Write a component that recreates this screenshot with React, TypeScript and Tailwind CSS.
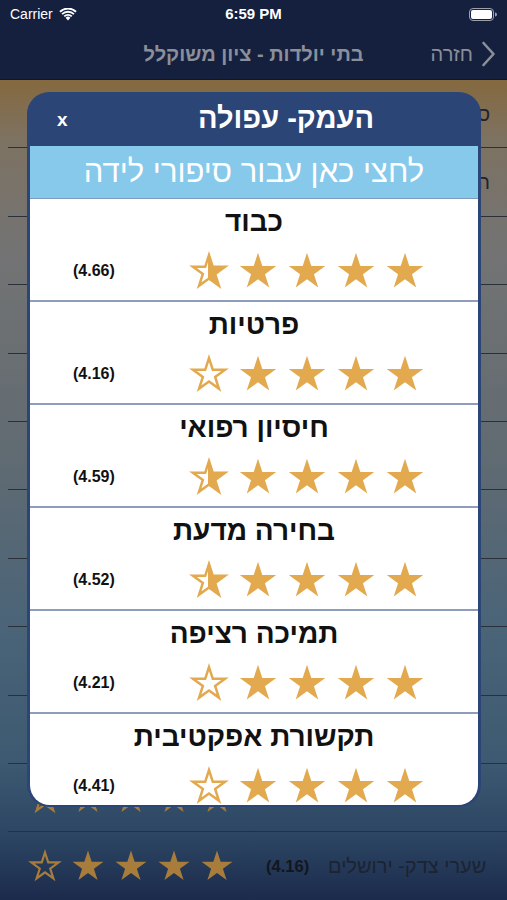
import React from "react";

const STAR =
  "M12 1.1L14.59 9.04L22.94 9.05L16.18 13.96L18.76 21.9L12 17L5.24 21.9L7.82 13.96L1.06 9.05L9.41 9.04Z";
const STAR_OUT =
  "M12 2.48L14.28 9.47L21.63 9.48L15.68 13.8L17.95 20.78L12 16.47L6.05 20.78L8.32 13.8L2.37 9.48L9.72 9.47Z";

type Kind = "full" | "empty" | "half";

function Star({ kind, color, size, id }: { kind: Kind; color: string; size: number; id: string }) {
  return (
    <svg width={size} height={size} viewBox="0 0 24 24" className="shrink-0">
      {kind === "full" && <path d={STAR} fill={color} />}
      {kind !== "full" && (
        <>
          <defs>
            <clipPath id={id}>
              <rect x="11.4" y="0" width="13" height="24" />
            </clipPath>
          </defs>
          {kind === "half" && <path d={STAR} fill={color} clipPath={`url(#${id})`} />}
          <path d={STAR_OUT} fill="none" stroke={color} strokeWidth="1.5" strokeLinejoin="miter" />
        </>
      )}
    </svg>
  );
}

const bgRows = [
  { name: "סורוקה- באר שבע המרכז הרפואי", r: "4.42" },
  { name: "הלל יפה- חדרה המרכז הרפואי", r: "4.38" },
  { name: "רמב״ם- חיפה", r: "4.35" },
  { name: "בני ציון- חיפה", r: "4.30" },
  { name: "מאיר- כפר סבא", r: "4.29" },
  { name: "וולפסון- חולון", r: "4.27" },
  { name: "ליס- תל אביב", r: "4.25" },
  { name: "אסף הרופא", r: "4.22" },
  { name: "קפלן- רחובות", r: "4.20" },
  { name: "לניאדו- נתניה", r: "4.19" },
  { name: "פוריה- טבריה", r: "4.17" },
  { name: "שערי צדק- ירושלים", r: "4.16" },
];

const modalRows: { title: string; r: string; first: Kind }[] = [
  { title: "כבוד", r: "4.66", first: "half" },
  { title: "פרטיות", r: "4.16", first: "empty" },
  { title: "חיסיון רפואי", r: "4.59", first: "half" },
  { title: "בחירה מדעת", r: "4.52", first: "half" },
  { title: "תמיכה רציפה", r: "4.21", first: "empty" },
  { title: "תקשורת אפקטיבית", r: "4.41", first: "empty" },
];

export default function App() {
  return (
    <div className="relative w-[507px] h-[900px] overflow-hidden font-['Liberation_Sans',Arial,sans-serif] bg-[#15203f]">
      {/* status bar */}
      <div className="h-[28px] flex items-center justify-between px-[10px] text-white text-[14px]">
        <div className="flex items-center gap-[6px] w-[120px]">
          <span>Carrier</span>
          <svg width="18" height="13" viewBox="0 0 18 13">
            <path d="M9 12.5L6.6 9.8a3.4 3.4 0 014.8 0z" fill="white" />
            <path d="M4.6 7.7a6.3 6.3 0 018.8 0l-1.3 1.4a4.4 4.4 0 00-6.2 0z" fill="white" />
            <path d="M2.4 5.4a9.5 9.5 0 0113.2 0l-1.3 1.4a7.6 7.6 0 00-10.6 0z" fill="white" />
            <path d="M0.3 3.1a12.6 12.6 0 0117.4 0l-1.3 1.4a10.7 10.7 0 00-14.8 0z" fill="white" />
          </svg>
        </div>
        <div className="font-semibold text-[15px]">6:59 PM</div>
        <div className="w-[120px] flex justify-end">
          <svg width="28" height="13" viewBox="0 0 28 13">
            <rect x="0.5" y="0.5" width="24" height="12" rx="3.5" fill="none" stroke="#9aa0ad" strokeWidth="1" />
            <rect x="2" y="2" width="21" height="9" rx="2" fill="white" />
            <path d="M26 4.5v4a2 2 0 000-4z" fill="#9aa0ad" />
          </svg>
        </div>
      </div>
      {/* nav bar */}
      <div className="h-[52px] flex items-center justify-between border-b border-[#0f1730]" dir="rtl">
        <div className="flex items-center gap-[8px] pr-[11px] w-[110px]">
          <svg width="15" height="26" viewBox="0 0 15 26">
            <path d="M2.5 2l10 11-10 11" fill="none" stroke="#8b8f99" strokeWidth="2.6" strokeLinecap="round" strokeLinejoin="round" />
          </svg>
          <span className="text-[20px] text-[#8b8f99]">חזרה</span>
        </div>
        <div className="text-[20px] font-bold text-[#8b8f99]">בתי יולדות - ציון משוקלל</div>
        <div className="w-[110px]" />
      </div>
      {/* page list */}
      <div className="h-[820px] bg-[linear-gradient(180deg,#85693f_0px,#7d7262_60px,#737373_170px,#616b72_370px,#4b6478_540px,#3d5a72_680px,#2b4462_760px,#1c2a4c_820px)]">
        {bgRows.map((row, i) => (
          <div key={i} className="ml-[8px] h-[68.4px] border-b border-[#2a303a] flex items-center pl-[20px]">
            <div className="flex items-center gap-[9px]">
              {[0, 1, 2, 3, 4].map((s) => (
                <Star key={s} kind={s === 0 ? "empty" : "full"} color="#a87d3c" size={34} id={`bg${i}-${s}`} />
              ))}
            </div>
            <div className="ml-[32px] w-[48px] text-[16.5px] font-bold text-[#12161f] whitespace-nowrap">({row.r})</div>
            <div
              dir="rtl"
              className="ml-[14px] w-[162px] text-left whitespace-nowrap overflow-hidden text-[20px] text-[#1c2331]"
            >
              {row.name}
            </div>
          </div>
        ))}
      </div>

      {/* modal */}
      <div className="absolute left-[27px] top-[92px] w-[454px] rounded-[22px] bg-[#2c4577] px-[3px] pb-[2px]">
        <div className="relative h-[54px] flex items-center justify-center pl-[64px]">
          <span className="absolute left-[27px] top-[14px] text-[19px] font-bold text-white">x</span>
          <span dir="rtl" className="text-[29px] font-bold text-white whitespace-nowrap">
            העמק- עפולה
          </span>
        </div>
        <div className="h-[52px] bg-[#87c9eb] flex items-center justify-center">
          <span dir="rtl" className="text-[31px] text-white whitespace-nowrap">
            לחצי כאן עבור סיפורי לידה
          </span>
        </div>
        <div className="h-[607px] bg-white rounded-b-[20px] overflow-hidden border-t border-[#7f9bbd]">
          {modalRows.map((row, i) => (
            <div key={i} className="h-[103px] border-b-2 border-[#8d9dba] flex flex-col">
              <div dir="rtl" className="h-[46px] flex items-center justify-center text-[28px] font-bold text-[#111]">
                {row.title}
              </div>
              <div className="mt-[6px] h-[40px] flex items-center">
                <div className="ml-[43px] w-[116px] text-[16px] font-bold text-[#111]">({row.r})</div>
                <div className="flex items-center gap-[9px]">
                  {[0, 1, 2, 3, 4].map((s) => (
                    <Star
                      key={s}
                      kind={s === 0 ? row.first : "full"}
                      color="#e3a94f"
                      size={40}
                      id={`m${i}-${s}`}
                    />
                  ))}
                </div>
              </div>
            </div>
          ))}
        </div>
      </div>
    </div>
  );
}
